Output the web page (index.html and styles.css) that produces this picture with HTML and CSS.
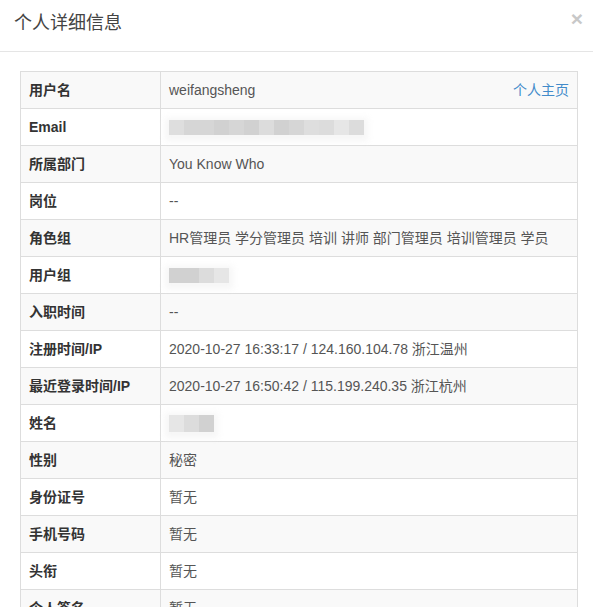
FILE: index.html
```html
<!DOCTYPE html>
<html lang="zh-CN">
<head>
<meta charset="utf-8">
<title>个人详细信息</title>
<link rel="stylesheet" href="styles.css">
</head>
<body>
<div class="modal">
  <div class="modal-header">
    <h4 class="modal-title">个人详细信息</h4>
    <button class="close" type="button">×</button>
  </div>
  <div class="modal-body">
    <table class="info">
      <tbody>
        <tr><th>用户名</th><td><div class="split"><span>weifangsheng</span><a class="link" href="#">个人主页</a></div></td></tr>
        <tr><th>Email</th><td><div class="mosaic m-email"><i class="s1"></i><i class="s2"></i><i class="s2"></i><i class="s3"></i><i class="s2"></i><i class="s3"></i><i class="s4"></i><i class="s3"></i><i class="s2"></i><i class="s1"></i><i class="s4"></i><i class="s5"></i><i class="s4"></i></div></td></tr>
        <tr><th>所属部门</th><td>You Know Who</td></tr>
        <tr><th>岗位</th><td>--</td></tr>
        <tr><th>角色组</th><td>HR管理员 学分管理员 培训 讲师 部门管理员 培训管理员 学员</td></tr>
        <tr><th>用户组</th><td><div class="mosaic m-group"><i class="s3"></i><i class="s3"></i><i class="s4"></i><i class="s5"></i></div></td></tr>
        <tr><th>入职时间</th><td>--</td></tr>
        <tr><th>注册时间/IP</th><td>2020-10-27 16:33:17 / 124.160.104.78 浙江温州</td></tr>
        <tr><th>最近登录时间/IP</th><td>2020-10-27 16:50:42 / 115.199.240.35 浙江杭州</td></tr>
        <tr><th>姓名</th><td><div class="mosaic m-name"><i class="s5"></i><i class="s4"></i><i class="s3"></i></div></td></tr>
        <tr><th>性别</th><td>秘密</td></tr>
        <tr><th>身份证号</th><td>暂无</td></tr>
        <tr><th>手机号码</th><td>暂无</td></tr>
        <tr><th>头衔</th><td>暂无</td></tr>
        <tr><th>个人签名</th><td>暂无</td></tr>
      </tbody>
    </table>
  </div>
</div>
</body>
</html>
```
FILE: styles.css
```css
html, body {
  margin: 0;
  padding: 0;
  background: #fff;
}
body {
  font-family: "Liberation Sans", "Noto Sans CJK SC", sans-serif;
  font-size: 14px;
  color: #333;
}
.modal {
  width: 593px;
}
.modal-header {
  display: flex;
  align-items: center;
  justify-content: space-between;
  height: 52px;
  box-sizing: border-box;
  padding: 0 10px 0 14px;
  border-bottom: 1px solid #e5e5e5;
}
.modal-title {
  margin: 0;
  font-size: 18px;
  line-height: 24px;
  font-weight: normal;
  color: #444;
  margin-top: -6px;
}
.close {
  border: 0;
  background: none;
  padding: 0;
  font-family: "Liberation Sans", sans-serif;
  font-size: 21px;
  font-weight: bold;
  line-height: 1;
  color: #c8c8c8;
  margin-top: -14px;
}
.modal-body {
  padding: 19px 15px 0 20px;
}
.info {
  width: 100%;
  border-collapse: collapse;
  border: 1px solid #ddd;
}
.info th, .info td {
  border: 1px solid #ddd;
  padding: 8px;
  line-height: 20px;
  height: 20px;
  text-align: left;
  vertical-align: middle;
}
.info th {
  width: 123px;
  font-weight: bold;
  color: #333;
}
.info td {
  color: #555;
}
.info tr:nth-child(odd) {
  background: #f9f9f9;
}
.split {
  display: flex;
  justify-content: space-between;
}
.link {
  color: #428bca;
  text-decoration: none;
}
.mosaic {
  display: flex;
  height: 15px;
  box-shadow: 0 2px 6px 4px rgba(245,245,245,0.9);
  filter: blur(0.4px);
}
.mosaic i {
  display: block;
  width: 15px;
  height: 15px;
}
.m-email { width: 195px; }
.m-group { width: 60px; }
.m-name { width: 45px; height: 17px; }
.m-name i { height: 17px; }
.s1 { background: #dedede; }
.s2 { background: #d6d6d6; }
.s3 { background: #d1d1d1; }
.s4 { background: #dcdcdc; }
.s5 { background: #e6e6e6; }
```
